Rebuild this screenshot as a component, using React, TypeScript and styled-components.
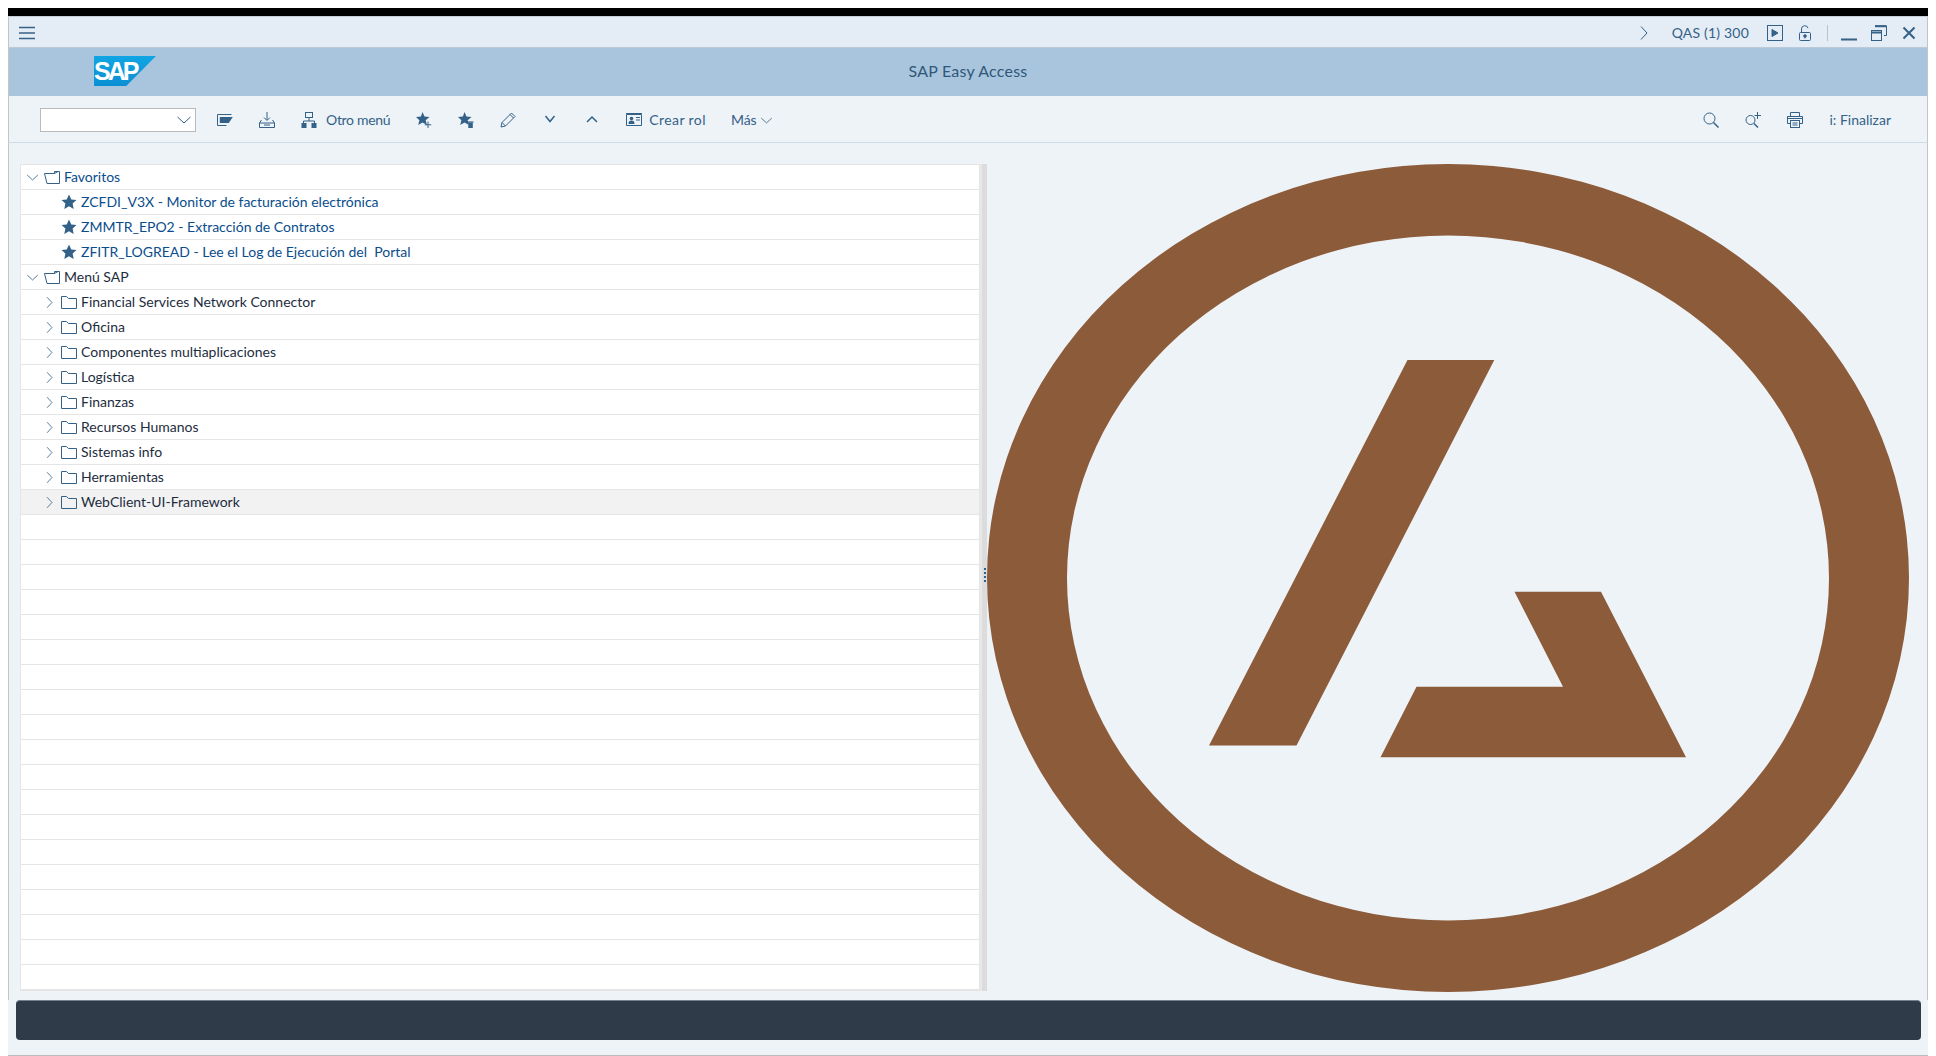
import React from 'react';
import styled, { createGlobalStyle } from 'styled-components';

const GlobalStyle = createGlobalStyle`
  html, body {
    margin: 0;
    padding: 0;
    background: #ffffff;
    font-family: "Lato", "Liberation Sans", sans-serif;
  }
`;

const ICON = '#346187';

type IconProps = { size?: number; children: React.ReactNode };
const Ico = ({ size = 16, children }: IconProps) => (
  <svg width={size} height={size} viewBox="0 0 16 16" fill="none" stroke={ICON} strokeWidth={1} style={{ display: 'block', flex: 'none' }}>
    {children}
  </svg>
);

const Menu = () => (
  <Ico size={16}>
    <path d="M0 2.500h16M0 8h16M0 13.500h16" strokeWidth={1.500} />
  </Ico>
);
const ChevronRight = () => (
  <Ico><path d="M5 1.500l6 6.500-6 6.500" /></Ico>
);
const PlayBox = () => (
  <Ico><rect x="0.500" y="0.500" width="15" height="15" /><path d="M5 4.500v7l6-3.500z" fill={ICON} /></Ico>
);
const Lock = () => (
  <Ico>
    <rect x="2.500" y="7.500" width="11" height="8" rx="1" />
    <path d="M4.500 7.500V4a3.300 3.300 0 0 1 6.500-.8" />
    <circle cx="8" cy="11" r="1.300" fill={ICON} />
    <path d="M8 11v2.500" />
  </Ico>
);
const Minimize = () => (
  <Ico><path d="M0 14.500h16" strokeWidth={2} /></Ico>
);
const Restore = () => (
  <Ico>
    <rect x="0.500" y="5.500" width="10" height="10" />
    <path d="M0.500 7.500h10" strokeWidth={2} />
    <path d="M4 1h11.500v9.500H13" strokeWidth={1} />
    <path d="M4 1.200h11.500" strokeWidth={2} />
  </Ico>
);
const Close = () => (
  <Ico><path d="M2.500 2.500l11 11M13.500 2.500l-11 11" strokeWidth={2} /></Ico>
);
const Caret = () => (
  <Ico><path d="M1.500 5l6.500 6 6.500-6" /></Ico>
);
const Transfer = () => (
  <Ico>
    <path d="M0.500 2.500h14M0.500 2.500v11h9" />
    <path d="M2.800 5h13l-4 6H2.800z" fill={ICON} stroke="none" />
  </Ico>
);
const Download = () => (
  <Ico>
    <path d="M8 0v8M5 5.500L8 8.500l3-3" />
    <path d="M2.500 8L0.500 11v4.500h15V11l-2-3" />
    <path d="M0.500 11h15M5 13h6" />
  </Ico>
);
const Hierarchy = () => (
  <Ico>
    <rect x="4.500" y="0.500" width="7" height="5" />
    <path d="M8 5.500V9M2.500 11V9h11v2" />
    <rect x="0.500" y="11" width="5" height="5" fill={ICON} stroke="none" />
    <rect x="10.500" y="11" width="5" height="5" fill={ICON} stroke="none" />
  </Ico>
);
const StarShape = 'M6.500 0l2 4.600 5 .4-3.800 3.200 1.200 4.900-4.400-2.600-4.300 2.600 1.200-4.900L0 5l4.900-.4z';
const StarPlus = () => (
  <Ico>
    <path d={StarShape} fill={ICON} stroke="none" />
    <path d="M12 9.500v6.500M8.800 12.800h6.400" />
  </Ico>
);
const StarTrash = () => (
  <Ico>
    <path d={StarShape} fill={ICON} stroke="none" />
    <path d="M9.500 10h6" strokeWidth={1.200} />
    <rect x="10.300" y="10.500" width="4.500" height="5.500" fill={ICON} stroke="none" />
  </Ico>
);
const Pencil = () => (
  <Ico>
    <path d="M1 15l1-4.500L11.500 1l3.500 3.500L5.500 14z" />
    <path d="M2 10.500L5.500 14M10 2.500l3.500 3.500" />
  </Ico>
);
const ChevDown = () => (
  <Ico><path d="M3.500 4L8 9.500 12.500 4" strokeWidth={1.500} /></Ico>
);
const ChevUp = () => (
  <Ico><path d="M3 10L8 5l5 5" strokeWidth={1.500} /></Ico>
);
const RoleCard = () => (
  <Ico>
    <path d="M0.500 2.500h15v11H.5z" />
    <path d="M0 1.500h16" strokeWidth={1} />
    <circle cx="5.500" cy="6.500" r="1.800" fill={ICON} stroke="none" />
    <path d="M2.500 12c0-3 1-3.500 3-3.500s3 .5 3 3.500z" fill={ICON} stroke="none" />
    <path d="M10 5.500h4M10 8h4" />
  </Ico>
);
const Search = () => (
  <Ico><circle cx="6.500" cy="6.500" r="5.500" /><path d="M10.500 10.500l5 5" strokeWidth={1.500} /></Ico>
);
const SearchPlus = () => (
  <Ico>
    <circle cx="5.500" cy="8" r="4.500" />
    <path d="M9 11.500l4 4" strokeWidth={1.500} />
    <path d="M12.500 0v7M9.500 3.500h6.500" />
  </Ico>
);
const Printer = () => (
  <Ico>
    <path d="M3.500 4V.5h9V4" />
    <path d="M3.500 11.500H.5V4.500h15v7h-3" />
    <path d="M.5 6.500h15" />
    <rect x="3.500" y="8.500" width="9" height="7" fill="#eef3f8" />
    <path d="M5.500 11h5M5.500 13h5" />
  </Ico>
);
const FolderOpen = () => (
  <Ico>
    <path d="M3 14.500L.5 4.500h10V2.500h5v12z" />
    <path d="M10.500 4.500l3.500-2" />
  </Ico>
);
const Folder = () => (
  <Ico>
    <path d="M.5 14.500V2.500h5l2 2h8v10z" />
  </Ico>
);
const Star = () => (
  <Ico><path d="M8 .5l2.300 5 5.200.6-3.900 3.500 1.100 5.400L8 12.200 3.300 15l1.100-5.400L.5 6.100l5.200-.6z" fill={ICON} stroke="none" /></Ico>
);

const Window = styled.div`
  margin: 8px 8px 0;
  height: 1048px;
  display: flex;
  flex-direction: column;
  box-sizing: border-box;
  background: #eef3f8;
  border-bottom: 1px solid #bdbdbd;
`;
const TopEdge = styled.div`
  height: 8px;
  flex: none;
  background: #000000;
  border-bottom: 1px solid #c6cdd4;
`;
const ShellBar = styled.div`
  height: 29px;
  flex: none;
  display: flex;
  align-items: center;
  padding: 1px 10px 0 10px;
  background: #e4ecf5;
  border-left: 1px solid #c4c4c4;
  border-right: 1px solid #c4c4c4;
  border-bottom: 1px solid #bcc9d6;
`;
const SystemText = styled.span`
  font-size: 14px;
  letter-spacing: 0.2px;
  color: #346187;
  margin: 0 18px 0 20px;
`;
const ShellIcon = styled.span`
  display: flex;
  margin-left: ${(p: { $gap: number }) => p.$gap}px;
`;
const Separator = styled.span`
  width: 1px;
  height: 16px;
  background: #b9c3cd;
  margin: 0 13px 0 14px;
`;
const Spacer = styled.div`
  flex: 1;
`;
const TitleBand = styled.div`
  height: 48px;
  flex: none;
  display: flex;
  align-items: center;
  position: relative;
  justify-content: center;
  background: #a9c5de;
  border-right: 1px solid #c4c4c4;
  border-left: 1px solid #c4c4c4;
`;
const LogoWrap = styled.div`
  position: absolute;
  left: 85px;
  top: 8px;
  width: 62px;
  height: 30px;
  background: linear-gradient(180deg, #11a5e4, #0b8fd3);
  clip-path: polygon(0 0, 100% 0, 52% 100%, 0 100%);
  color: #ffffff;
  font: bold 25px/30px "Liberation Sans", sans-serif;
  letter-spacing: -3px;
  box-sizing: border-box;
`;
const Title = styled.h1`
  margin: 0 0 3px;
  font-size: 16px;
  letter-spacing: 0.2px;
  font-weight: 400;
  color: #2f5878;
`;
const Toolbar = styled.div`
  height: 47px;
  flex: none;
  box-sizing: border-box;
  display: flex;
  align-items: center;
  padding: 2px 36px 0 31px;
  border-left: 1px solid #c4c4c4;
  border-right: 1px solid #c4c4c4;
  border-bottom: 1px solid #d0dce8;
`;
const Combo = styled.div`
  width: 156px;
  height: 24px;
  box-sizing: border-box;
  background: #ffffff;
  border: 1px solid #bbbbbb;
  display: flex;
  align-items: center;
  justify-content: flex-end;
  padding-right: 3px;
  margin-right: 21px;
`;
const ToolButton = styled.button<{ $right: number; $gap?: number }>`
  display: flex;
  align-items: center;
  gap: ${(p) => p.$gap ?? 7}px;
  border: 0;
  padding: 0;
  background: transparent;
  font-family: inherit;
  font-size: 14px;
  color: #346187;
  margin-right: ${(p) => p.$right}px;
`;
const ButtonText = styled.span<{ $track?: number }>`
  padding-bottom: 2px;
  letter-spacing: ${(p) => p.$track ?? 0}px;
`;
const MoreCaret = styled.span`
  display: flex;
  margin-left: -4px;
  svg { width: 13px; height: 13px; }
`;
const Body = styled.div`
  flex: 1;
  min-height: 0;
  display: flex;
  padding: 21px 18px 0 11px;
  border-left: 1px solid #c4c4c4;
  border-right: 1px solid #c4c4c4;
`;
const Tree = styled.div`
  width: 960px;
  height: 827px;
  flex: none;
  box-sizing: border-box;
  background: #ffffff;
  border: 1px solid #e5e5e5;
  overflow: hidden;
`;
const Row = styled.div<{ $level?: number; $active?: boolean }>`
  height: 25px;
  box-sizing: border-box;
  display: flex;
  align-items: center;
  padding-left: ${(p) => (p.$level === 1 ? 22 : 5)}px;
  border-bottom: 1px solid #e5e5e5;
  background: ${(p) => (p.$active ? '#f2f2f2' : '#ffffff')};
`;
const Toggle = styled.span`
  display: flex;
  width: 13px;
  margin-right: 5px;
  svg { width: 13px; height: 13px; }
`;
const NodeIcon = styled.span`
  display: flex;
  margin-right: 4px;
`;
const StarIcon = styled(NodeIcon)`
  margin-left: 35px;
`;
const Label = styled.span<{ $link?: boolean }>`
  font-size: 14px;
  white-space: pre;
  padding-bottom: 2px;
  color: ${(p) => (p.$link ? '#0a4d8c' : '#1d2d3e')};
`;
const Splitter = styled.div`
  width: 7px;
  height: 827px;
  flex: none;
  display: flex;
  flex-direction: column;
  align-items: center;
  justify-content: center;
  gap: 2px;
  padding-bottom: 6px;
  background: #dcdcdc;
  border-left: 2px solid #e8e8e8;
  box-sizing: border-box;
`;
const Grip = styled.i`
  width: 2px;
  height: 2px;
  background: #2a6397;
`;
const LogoPanel = styled.div`
  flex: 1;
  min-width: 0;
`;
const MessageBar = styled.div`
  height: 40px;
  flex: none;
  margin: 0 7px 0 8px;
  border-radius: 4px;
  background: #2f3b48;
  border-top: 1px solid #75818c;
  box-sizing: border-box;
`;
const Footer = styled.div`
  height: 15px;
  flex: none;
`;

const favorites = [
  'ZCFDI_V3X - Monitor de facturación electrónica',
  'ZMMTR_EPO2 - Extracción de Contratos',
  'ZFITR_LOGREAD - Lee el Log de Ejecución del  Portal',
];
const folders = [
  'Financial Services Network Connector',
  'Oficina',
  'Componentes multiaplicaciones',
  'Logística',
  'Finanzas',
  'Recursos Humanos',
  'Sistemas info',
  'Herramientas',
  'WebClient-UI-Framework',
];
const emptyRows = Array.from({ length: 19 }, (_, i) => i);

export default function App() {
  return (
    <>
      <GlobalStyle />
      <Window>
        <TopEdge />
        <ShellBar>
          <Menu />
          <Spacer />
          <ChevronRight />
          <SystemText>QAS (1) 300</SystemText>
          <PlayBox />
          <ShellIcon $gap={14}><Lock /></ShellIcon>
          <Separator />
          <Minimize />
          <ShellIcon $gap={14}><Restore /></ShellIcon>
          <ShellIcon $gap={14}><Close /></ShellIcon>
        </ShellBar>
        <TitleBand>
          <LogoWrap>SAP</LogoWrap>
          <Title>SAP Easy Access</Title>
        </TitleBand>
        <Toolbar>
          <Combo><Caret /></Combo>
          <ToolButton $right={26}><Transfer /></ToolButton>
          <ToolButton $right={26}><Download /></ToolButton>
          <ToolButton $right={26} $gap={9}><Hierarchy /><ButtonText $track={-0.3}>Otro menú</ButtonText></ToolButton>
          <ToolButton $right={26}><StarPlus /></ToolButton>
          <ToolButton $right={26}><StarTrash /></ToolButton>
          <ToolButton $right={26}><Pencil /></ToolButton>
          <ToolButton $right={26}><ChevDown /></ToolButton>
          <ToolButton $right={26}><ChevUp /></ToolButton>
          <ToolButton $right={25}><RoleCard /><ButtonText $track={0.4}>Crear rol</ButtonText></ToolButton>
          <ToolButton $right={0}><ButtonText>Más</ButtonText><MoreCaret><Caret /></MoreCaret></ToolButton>
          <Spacer />
          <ToolButton $right={26}><Search /></ToolButton>
          <ToolButton $right={26}><SearchPlus /></ToolButton>
          <ToolButton $right={26}><Printer /></ToolButton>
          <ToolButton $right={0}><ButtonText>i: Finalizar</ButtonText></ToolButton>
        </Toolbar>
        <Body>
          <Tree>
            <Row>
              <Toggle><Caret /></Toggle>
              <NodeIcon><FolderOpen /></NodeIcon>
              <Label $link>Favoritos</Label>
            </Row>
            {favorites.map((f) => (
              <Row key={f}>
                <StarIcon><Star /></StarIcon>
                <Label $link>{f}</Label>
              </Row>
            ))}
            <Row>
              <Toggle><Caret /></Toggle>
              <NodeIcon><FolderOpen /></NodeIcon>
              <Label>Menú SAP</Label>
            </Row>
            {folders.map((f) => (
              <Row key={f} $level={1} $active={f === 'WebClient-UI-Framework'}>
                <Toggle><ChevronRight /></Toggle>
                <NodeIcon><Folder /></NodeIcon>
                <Label>{f}</Label>
              </Row>
            ))}
            {emptyRows.map((i) => (
              <Row key={i} />
            ))}
          </Tree>
          <Splitter>
            <Grip /><Grip /><Grip /><Grip />
          </Splitter>
          <LogoPanel>
            <svg width="922" height="828" viewBox="0 0 922 828" style={{ display: 'block' }}>
              <path
                fillRule="evenodd"
                fill="#8c5b3a"
                d="M0 414a461 414 0 1 0 922 0a461 414 0 1 0-922 0zM80 414a381 342.500 0 1 1 762 0a381 342.500 0 1 1-762 0z"
              />
              <path fill="#8c5b3a" d="M420.500 196h86.800L309.500 581.500H222zM527.500 427.700H614L699 593.300H393.500l36-70.600H576z" />
            </svg>
          </LogoPanel>
        </Body>
        <MessageBar />
        <Footer />
      </Window>
    </>
  );
}
